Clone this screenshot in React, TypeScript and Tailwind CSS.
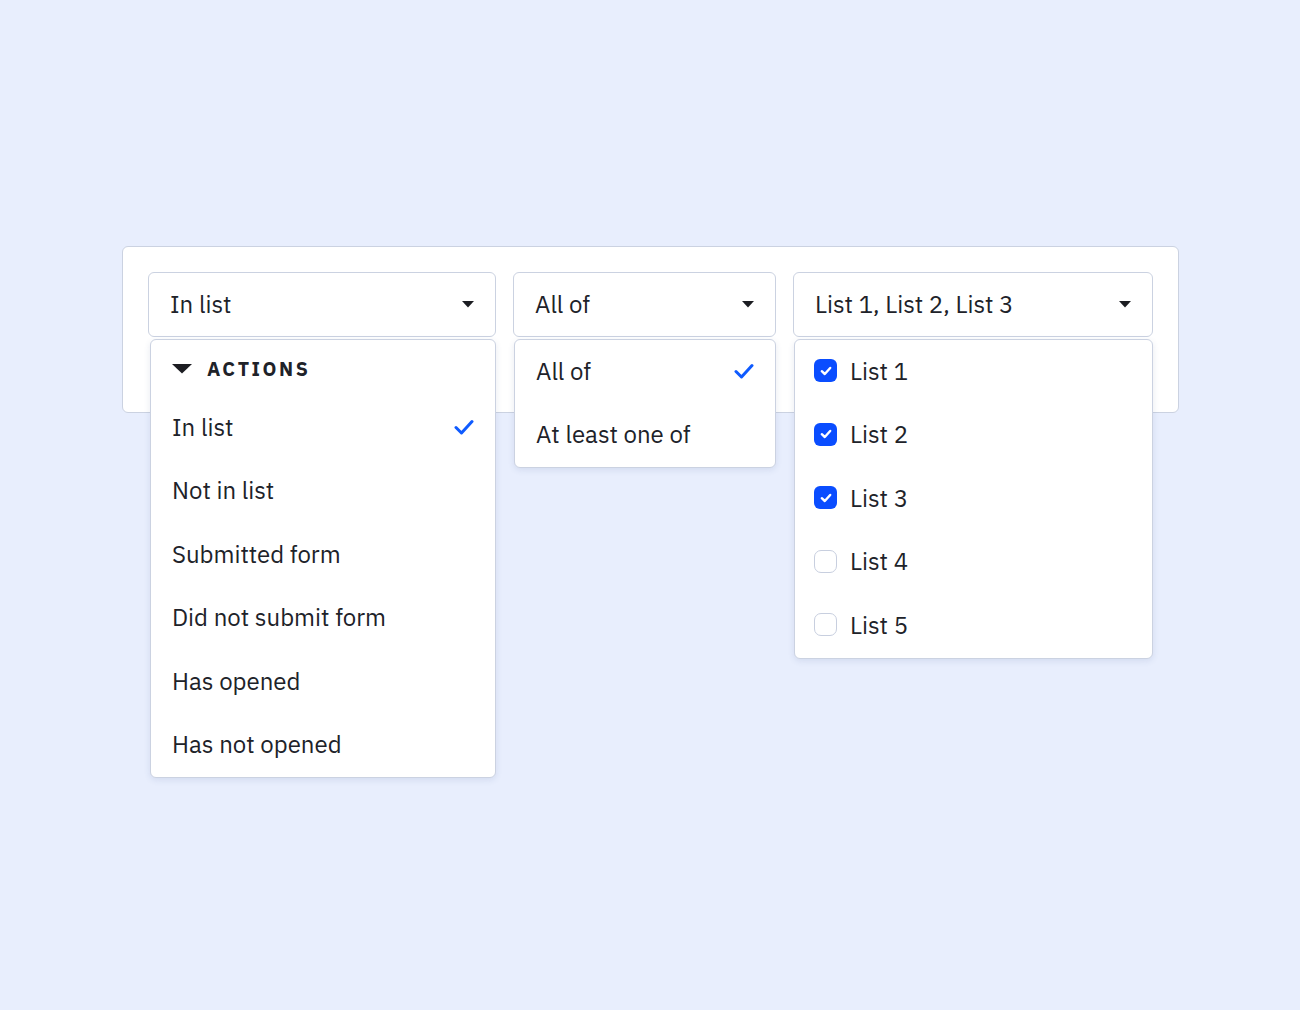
import React from "react";

const Caret = () => (
  <svg width="12" height="7" viewBox="0 0 12 7" className="shrink-0">
    <path d="M0 0 L12 0 L6 6.5 Z" fill="#1c1d22" />
  </svg>
);

const Check = () => (
  <svg width="20" height="16" viewBox="0 0 20 16" className="shrink-0">
    <path d="M2 8.5 L7.5 14 L18 2.5" fill="none" stroke="#0f5bff" strokeWidth="3" strokeLinecap="round" strokeLinejoin="round" />
  </svg>
);

const Box = ({ on }: { on: boolean }) =>
  on ? (
    <div className="w-[23px] h-[23px] rounded-[6px] bg-[#0a4dff] flex items-center justify-center shrink-0">
      <svg width="12" height="10" viewBox="0 0 12 10">
        <path d="M1.8 5.2 L4.8 8 L10.2 2" fill="none" stroke="#fff" strokeWidth="2.4" strokeLinecap="round" strokeLinejoin="round" />
      </svg>
    </div>
  ) : (
    <div className="w-[23px] h-[23px] rounded-[7px] border-[1.5px] border-[#c8cfdf] bg-white shrink-0" />
  );

const Select = ({ label }: { label: string }) => (
  <div className="h-[65px] rounded-[6px] border border-[#cbd2e1] bg-white flex items-center justify-between pl-[21px] pr-[21px] pb-[1px] text-[24px] text-[#202229]">
    <span>{label}</span>
    <Caret />
  </div>
);

const Row = ({ children }: { children: React.ReactNode }) => (
  <div className="h-[63.5px] flex items-center px-[21px] pb-[2px] text-[24px] text-[#202229]">{children}</div>
);

export default function App() {
  const font = { fontFamily: '"IBM Plex Sans", "Open Sans", sans-serif' };
  return (
    <div className="min-h-[1010px] bg-[#e8eefd] pt-[246px] pl-[122px]" style={font}>
      <div className="w-[1057px] h-[167px] rounded-[6px] border border-[#cbd2e1] bg-white pl-[25px] pt-[25px] flex items-start gap-[17px]">
        <div className="relative w-[348px]">
          <Select label="In list" />
          <div className="absolute top-[67px] left-[2px] right-0 rounded-[6px] border border-[#cbd2e1] bg-white shadow-[0_2px_6px_rgba(60,80,140,0.12)] z-10">
            <div className="h-[56px] flex items-center px-[21px] pt-[1px]">
              <svg width="20" height="10" viewBox="0 0 20 10" className="shrink-0">
                <path d="M0 0 L20 0 L10 9.5 Z" fill="#1c1d22" />
              </svg>
              <span className="ml-[15px] text-[19.5px] font-bold tracking-[2.6px] text-[#202229]">ACTIONS</span>
            </div>
            <Row>
              <span className="flex-1">In list</span>
              <Check />
            </Row>
            <Row>Not in list</Row>
            <Row>Submitted form</Row>
            <Row>Did not submit form</Row>
            <Row>Has opened</Row>
            <Row>Has not opened</Row>
          </div>
        </div>
        <div className="relative w-[263px]">
          <Select label="All of" />
          <div className="absolute top-[67px] left-[1px] right-0 rounded-[6px] border border-[#cbd2e1] bg-white shadow-[0_2px_6px_rgba(60,80,140,0.12)] z-10">
            <Row>
              <span className="flex-1">All of</span>
              <Check />
            </Row>
            <Row>At least one of</Row>
          </div>
        </div>
        <div className="relative w-[360px]">
          <Select label="List 1, List 2, List 3" />
          <div className="absolute top-[67px] left-[1px] right-0 rounded-[6px] border border-[#cbd2e1] bg-white shadow-[0_2px_6px_rgba(60,80,140,0.12)] z-10">
            {[1, 2, 3, 4, 5].map((n) => (
              <Row key={n}>
                <span className="-ml-[2px] mr-[13px] flex">
                  <Box on={n <= 3} />
                </span>
                List {n}
              </Row>
            ))}
          </div>
        </div>
      </div>
    </div>
  );
}
